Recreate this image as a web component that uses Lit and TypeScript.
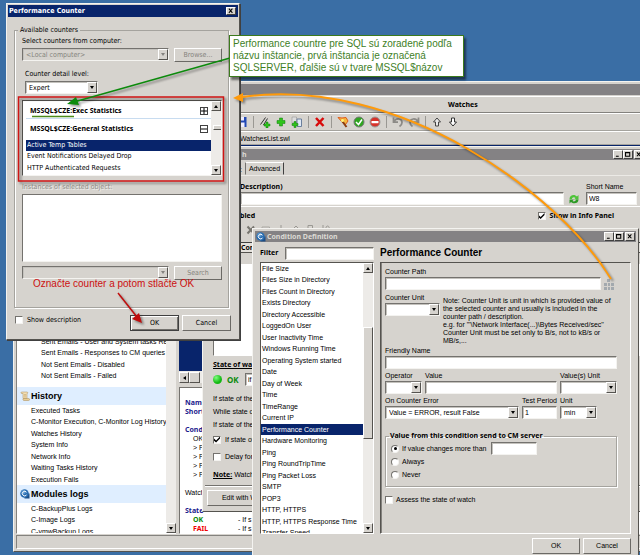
import { LitElement, html, css, svg } from "lit";
import { customElement } from "lit/decorators.js";
import { classMap } from "lit/directives/class-map.js";

const CONDITIONS = [
  "File Size", "Files Size in Directory", "Files Count in Directory", "Exists Directory",
  "Directory Accessible", "LoggedOn User", "User Inactivity Time", "Windows Running Time",
  "Operating System started", "Date", "Day of Week", "Time", "TimeRange", "Current IP",
  "Performance Counter", "Hardware Monitoring", "Ping", "Ping RoundTripTime",
  "Ping Packet Loss", "SMTP", "POP3", "HTTP, HTTPS", "HTTP, HTTPS Response Time", "Transfer Speed",
];
const EMAILS = [
  "Sent Emails - User and System tasks Results", "Sent Emails - Responses to CM queries",
  "Not Sent Emails - Disabled", "Not Sent Emails - Failed",
];
const HISTORY = [
  "Executed Tasks", "C-Monitor Execution, C-Monitor Log History", "Watches History",
  "System Info", "Network Info", "Waiting Tasks History", "Execution Fails",
];
const MODULES = ["C-BackupPlus Logs", "C-Image Logs", "C-vmwBackup Logs"];
const COUNTERS = ["Active Temp Tables", "Event Notifications Delayed Drop", "HTTP Authenticated Requests"];

const logo = html`<svg class="logo" viewBox="0 0 20 20" aria-hidden="true">
  <rect x="9" y="9" width="10" height="10" fill="#1d4e86" />
  <circle cx="9" cy="9" r="8.5" fill="#2a6db0" />
  <circle cx="7" cy="6" r="4.5" fill="#6fa8dc" opacity=".7" />
  <path d="M13 6.5a4.6 4.6 0 1 0 0 5.4" fill="none" stroke="#fff" stroke-width="2" />
</svg>`;

const scroll = html`<svg class="logo" viewBox="0 0 20 20" aria-hidden="true">
  <path d="M4 2h10c2 0 2 3 0 3v10H6V5H4c-3 0-3-3 0-3z" fill="#f3dfb4" stroke="#a88a55" />
  <path d="M7 15h10c3 0 3 4 0 4H8c-2 0-3-2-1-4z" fill="#e9cd94" stroke="#a88a55" />
  <path d="M8 7h4M8 9.500h4M8 12h4" stroke="#b89a66" />
</svg>`;

const arrow = (dir: string) => html`<span class="btn-arrow"><i class=${dir}></i></span>`;

const bar = (thumb: string) => html`<span class="scrollbar" aria-hidden="true">
  ${arrow("up")}<span class="track"><span class="thumb ${thumb}"></span></span>${arrow("down")}</span>`;

const combo = (id: string, value: string, size: string, disabled = false) => html`<span class="combo ${size}">
  <select id=${id} ?disabled=${disabled}><option>${value}</option></select>${arrow("down")}</span>`;

const winButtons = html`<span class="wbtns">
  <button aria-label="Minimize"><svg viewBox="0 0 10 10"><path d="M2 7.500h4" /></svg></button>
  <button aria-label="Maximize"><svg viewBox="0 0 10 10"><path d="M1.500 2h6v5.500h-6zM1.500 2.500h6" /></svg></button>
  <button class="close" aria-label="Close"><svg viewBox="0 0 10 10"><path d="M2 2l5 5.500M7 2L2 7.500" /></svg></button>
</span>`;

@customElement("app-root")
export class AppRoot extends LitElement {
  static styles = css`
    :host { display: block; }
    * { box-sizing: border-box; }
    .desktop {
      position: relative; min-height: 100vh; overflow: hidden; background: #3a6ea5;
      font: 7px/10px "Liberation Sans", Arial, sans-serif; color: #000; white-space: nowrap;
    }
    button, input, select { font: inherit; color: inherit; margin: 0; border-radius: 0; min-width: 0; }
    ul { list-style: none; margin: 0; padding: 0; }
    h1, h2, h3, p, fieldset { margin: 0; padding: 0; font-weight: normal; font-size: inherit; min-width: 0; }
    .b, legend.b { font-family: "Noto Sans", "Open Sans", sans-serif; font-weight: bold; }
    .win {
      position: absolute; display: flex; flex-direction: column; background: #d6d3ce; padding: 1px;
      border: 1px solid; border-color: #f4f3f0 #55534f #55534f #f4f3f0;
    }
    .title {
      display: flex; align-items: center; flex: none; height: 11px; background: #848284; color: #dcdad5;
      font-family: "Noto Sans", "Open Sans", sans-serif; font-weight: bold;
    }
    .title h2 { flex: 1; font-weight: bold; }
    .logo { width: 10px; height: 10px; flex: none; }
    .wbtns { display: flex; padding-right: 1px; }
    .wbtns button, .x {
      display: block; width: 10px; height: 9px; padding: 0; background: #d6d3ce; color: #000;
      border: 1px solid; border-color: #fff #404040 #404040 #fff;
    }
    .wbtns .close { margin-left: 1px; }
    .wbtns svg, .x svg { display: block; width: 8px; height: 7px; }
    .wbtns path, .x path { stroke: #000; stroke-width: 1.500; fill: none; }
    .push {
      display: block; text-align: center; padding: 0; background: #d6d3ce; border: 1px solid;
      border-color: #fff #6b6965 #6b6965 #fff; height: 16px;
    }
    .push:disabled { color: #85837d; }
    .field {
      height: 13px; background: #fff; border: 1px solid; border-color: #74726e #f4f3f0 #f4f3f0 #74726e;
      padding: 0 2px; display: block; box-shadow: inset 1px 1px #c4c2bd;
    }
    .combo {
      display: flex; height: 13px; background: #fff; border: 1px solid;
      border-color: #74726e #f4f3f0 #f4f3f0 #74726e; box-shadow: inset 1px 1px #c4c2bd;
    }
    .combo select { flex: 1; appearance: none; border: 0; background: none; padding: 0 0 0 3px; width: 0; }
    .combo select:disabled { color: #85837d; opacity: 1; }
    .btn-arrow {
      flex: none; width: 10px; height: 11px; display: grid; place-items: center; background: #d6d3ce;
      border: 1px solid; border-color: #fff #55534f #55534f #fff;
    }
    .btn-arrow i { border: 2px solid transparent; width: 0; height: 0; }
    .btn-arrow .down { border-top: 3px solid #000; border-bottom: 0; }
    .btn-arrow .up { border-bottom: 3px solid #000; border-top: 0; }
    .btn-arrow .left { border-right: 3px solid #000; border-left: 0; }
    .check, .radio {
      appearance: none; width: 8px; height: 8px; background: #fff; flex: none; display: grid; place-items: center;
      border: 1px solid; border-color: #74726e #f4f3f0 #f4f3f0 #74726e;
    }
    .check:checked::before {
      content: ""; width: 6px; height: 6px; background: #000;
      clip-path: polygon(0 35%, 35% 65%, 100% 0, 100% 35%, 35% 100%, 0 70%);
    }
    .radio { border-radius: 50%; }
    .radio:checked::before { content: ""; width: 3px; height: 3px; border-radius: 50%; background: #000; }
    .opt { display: flex; align-items: center; gap: 3px; }
    .scrollbar { display: flex; flex-direction: column; width: 10px; background: #edebe8; flex: none; }
    .scrollbar .btn-arrow { height: 10px; }
    .track { flex: 1; display: flex; flex-direction: column; }
    .thumb { background: #d6d3ce; border: 1px solid; border-color: #fff #55534f #55534f #fff; }
    .thumb.list { margin-top: 54px; height: 112px; }
    .thumb.short { margin-top: 14px; height: 5px; }
    .thumb.none { display: none; }
    .rows { display: grid; grid-auto-rows: 11px 12px; line-height: 12px; }
    .sel { background: #08246b; color: #fff; }

    /* main window */
    .main { left: 13px; top: 81px; right: -4px; bottom: 3px; padding: 2px; }
    .head {
      height: 17px; margin-top: 1px; border: 1px solid; border-color: #fff transparent #84827e;
      padding-left: 431px; line-height: 15px; flex: none;
    }
    .tools {
      flex: none; height: 18px; display: flex; align-items: center; gap: 4px; padding-left: 220px;
      border-top: 1px solid #fff; border-bottom: 1px solid #a5a39e;
    }
    .tools svg { width: 12px; height: 12px; flex: none; }
    .tools .sep { width: 1px; height: 12px; background: #9a9893; margin: 0 1px; }
    .tools .tall { height: 17px; }
    .path { flex: none; height: 14px; padding-left: 224px; line-height: 14px; border-top: 1px solid #fff; border-bottom: 1px solid #a5a39e; }
    .body { flex: 1; min-height: 0; display: flex; gap: 3px; }
    .side { width: 160px; display: flex; border-left: 1px solid #84827e; border-bottom: 1px solid #fff; }
    .nav { flex: 1; min-width: 0; overflow: hidden; background: #fff; display: flex; flex-direction: column; justify-content: flex-end; }
    .nav > * { flex: none; }
    .nav .rows { padding-left: 14px; }
    .nav .emails { padding: 0 0 5px 24px; }
    .nav .last { margin-bottom: -4px; }
    .nav h3 {
      display: flex; align-items: center; gap: 1px; height: 18px; padding-left: 3px; background: #dfeeff;
      font: bold 9px/18px "Liberation Sans", Arial, sans-serif;
    }
    .mdi { flex: 1; min-width: 0; display: flex; flex-direction: column; }
    .navy { flex: 1; background: #08246b; }
    .hbar { display: flex; height: 12px; padding-top: 1px; background: #edebe8; }
    .hthumb { width: 11px; background: #d6d3ce; border: 1px solid; border-color: #fff #55534f #55534f #fff; }
    .info {
      height: 147px; margin-top: 4px; border: 1px solid; border-color: #74726e #fff #fff #74726e; background: #fff;
      padding: 10px 0 0 5px; line-height: 9px;
    }
    .info p { height: 9px; }
    .info .in { padding-left: 8px; display: flex; }
    .info .tag { width: 45px; }
    .blue { color: #1a1a8c; }
    .green { color: #0a8a0a; }
    .red { color: #f00000; }
    .status { height: 14px; flex: none; margin-top: 1px; border: 1px solid; border-color: #84827e #fff #fff #84827e; }

    /* watch window */
    .watch { left: 202px; top: 146px; right: -4px; height: 366px; padding: 2px; }
    .watch .title { padding: 0 0 0 37px; }
    .watch .wbtns { margin-right: -4px; }
    .tabs { height: 15px; flex: none; display: flex; align-items: end; padding-left: 35px; gap: 3px; }
    .tabs button {
      background: none; padding: 0 3px; height: 13px; border: 1px solid; border-color: #fff #404040 transparent #74726e; line-height: 11px;
    }
    .wtop { padding: 6px 0 0 35px; border-top: 1px solid #eceae6; }
    .wrow { display: flex; align-items: end; gap: 4px; }
    .grow { flex: 1; min-width: 0; }
    .wrow .field { width: 100%; }
    .short { width: 51px; margin: 0 4px 0 2px; }
    .refresh { width: 12px; height: 12px; flex: none; }
    .enabled { display: flex; justify-content: space-between; padding: 4px 27px 1px 35px; margin: 1px 0 0 -35px; border-top: 1px solid #fff; }
    .enabled .opt { gap: 4px; }
    .wicons { display: flex; gap: 5px; height: 19px; align-items: start; padding: 3px 0 0 6px; }
    .wicons svg { width: 10px; height: 10px; }
    .wlist { margin: 1px 0 0 8px; height: 114px; flex: none; background: #fff; border: 1px solid; border-color: #404040 #fff #fff #74726e; }
    .wlist .col { padding-left: 27px; height: 10px; background: #e4e1dc; border-bottom: 1px solid #55534f; }
    .wlist .grp { height: 11px; background: #d6d3ce; }
    .wstate { padding: 4px 0 0 8px; flex: 1; }
    .wstate h3 { text-decoration: underline; font-weight: bold; }
    .okrow { display: flex; align-items: center; gap: 5px; height: 19px; margin-bottom: 3px; }
    .dot { width: 9px; height: 9px; border-radius: 50%; background: radial-gradient(circle at 35% 30%, #7dff7d, #13b813 60%); }
    .okrow .b { width: 13px; font-size: 8px; }
    .okrow .field { width: 80px; }
    .wstate p { line-height: 13px; }
    .wstate .opt { height: 17px; gap: 4px; }
    .wstate .note { line-height: 20px; }
    .wfoot { border-top: 1px solid #74726e; box-shadow: inset 0 1px #fff; padding: 4px 2px 3px; }
    .wfoot .push { width: 80px; }

    /* condition window */
    .cond { left: 252px; top: 228px; right: 1px; bottom: -6px; padding: 2px; }
    .cond .title { padding-left: 1px; gap: 1px; }
    .cbody { flex: 1; display: grid; grid-template-columns: 114px 1fr; gap: 0 6px; padding: 5px 5px 0; grid-template-rows: 12px 1fr auto; }
    .filter { display: flex; align-items: center; gap: 7px; }
    .filter .field { flex: 1; }
    .cbody h1 { font: bold 10px/12px "Liberation Sans", Arial, sans-serif; }
    .clist { display: flex; margin-top: 3px; height: 272px; background: #fff; border: 1px solid; border-color: #55534f #fff #fff #55534f; overflow: hidden; }
    .clist .rows { flex: 1; }
    .clist li { padding-left: 1px; overflow: hidden; }
    .form {
      margin-top: 3px; padding: 4px 13px 0 4px; border: 1px solid; border-color: #55534f #fff #fff #55534f;
      box-shadow: inset 1px 0 #84827e; height: 272px;
    }
    .form label { display: block; }
    .form .field { width: 100%; }
    .line { display: flex; gap: 3px; align-items: end; }
    .line.top { align-items: start; }
    .line .grow, .line .col { min-width: 0; }
    .pick { width: 12px; height: 12px; flex: none; padding: 0; border: 0; background: none; }
    .pick svg { display: block; width: 10px; height: 11px; }
    .unit { width: 55px; }
    .oper { width: 37px; }
    .valunit { width: 57px; }
    .per { width: 35px; }
    .umin { width: 37px; }
    .tail { width: 57px; }
    .mt { margin-top: 3px; }
    .mt2 { margin-top: 2px; }
    .cnote { line-height: 8px; padding-top: 4px; margin-bottom: 1px; }
    .pathrow { padding-right: 1px; }
    .send { border: 1px solid #a5a39e; box-shadow: 1px 1px #fff, inset 1px 1px #fff; margin-top: 12px; padding: 1px 0 4px 5px; height: 56px; }
    .send legend { padding: 0 1px; margin-left: -2px; }
    .send .opt { height: 13px; }
    .send .field { width: 46px; margin-left: 2px; }
    .form .assess { display: flex; margin-top: 8px; }
    .cfoot { grid-column: 1 / -1; display: flex; justify-content: end; gap: 3px; padding: 4px 0 4px; }
    .cfoot .push { width: 48px; }

    /* counter dialog */
    .dlg {
      left: 6px; top: 3px; width: 234px; padding: 1px; border-width: 1px;
      font-family: "DejaVu Sans Condensed", "DejaVu Sans", sans-serif; box-shadow: 1px 1px #404040;
    }
    .dlg .title { background: #08246b; color: #fff; height: 12px; padding: 0 2px 0 1px; font-family: "DejaVu Sans Condensed", "DejaVu Sans", sans-serif; }
    .dlg .x { width: 10px; height: 8px; }
    .dlg .box { margin: 8px 9px 0 6px; border: 1px solid #a5a39e; box-shadow: 1px 1px #fff, inset 1px 0 #fff; padding: 1px 6px 27px 7px; }
    .dlg legend { padding: 0 2px; margin-left: -4px; }
    .box label { display: block; margin-bottom: 2px; }
    .drow { display: flex; gap: 5px; align-items: start; }
    .drow .combo { width: 147px; }
    .drow .push { width: 48px; height: 14px; line-height: 12px; }
    .mute { color: #8f8d87; text-shadow: 1px 1px #f0efec; }
    .combo:has(select:disabled) { background: #d6d3ce; }
    .combo:has(select:disabled) .down { border-top-color: #84827e; }
    .dlg .det { margin: 7px 0 0 3px; }
    .det .combo { width: 73px; }
    .counters {
      margin-top: 6px; height: 76px; display: flex; background: #fff; overflow: hidden;
      border: 1px solid; border-color: #55534f #f4f3f0 #f4f3f0 #55534f;
    }
    .counters .grow { padding-left: 3px; }
    .counters h3 { display: flex; justify-content: space-between; align-items: center; padding: 2px 3px 0 4px; height: 18px; border-bottom: 1px solid #c8dcf0; font-weight: bold; }
    .counters h3.open { border: 0; height: 21px; padding: 0 3px 1px 4px; }
    .box i.pm { width: 8px; height: 8px; border: 1px solid #404040; display: grid; place-items: center; }
    .pm svg { width: 6px; height: 6px; display: block; }
    .counters li { padding-left: 1px; line-height: 11px; }
    .inst { height: 68px; background: #fff; border: 1px solid; border-color: #74726e #f4f3f0 #f4f3f0 #74726e; margin-bottom: 4px; }
    .dlg .ilabel { margin-top: 6px; margin-bottom: 2px; }
    .dfoot { display: flex; justify-content: space-between; padding: 7px 7px 7px 7px; }
    .dfoot .opt { height: 10px; gap: 4px; }
    .btns { display: flex; gap: 3px; }
    .btns .push { width: 49px; }
    .dlg .main-btn { border-color: #404040; box-shadow: inset 1px 1px #fff, inset -1px -1px #74726e; }

    /* annotations */
    .marks { position: absolute; left: 0; top: 0; width: 640px; height: 555px; pointer-events: none; }
    .sh { filter: drop-shadow(2px 2px 1px rgba(0, 0, 0, .4)); }
    .tip {
      position: absolute; left: 229px; top: 35px; width: 235px; padding: 2px 0 2px 3px; border: 1px solid #3c7a1c;
      background: #fff; color: #41801f; font-size: 10px; line-height: 12px; box-shadow: 2px 3px 2px rgba(0, 0, 0, .5);
    }
    .hint { position: absolute; left: 33px; top: 278px; color: #cc1010; font-size: 10px; line-height: 12px; }
  `;

  private items(list: string[], selected = "") {
    return list.map((t) => html`<li class=${classMap({ sel: t === selected })}>${t}</li>`);
  }

  private toolbar() {
    const icon = (body: unknown) => html`<svg viewBox="0 0 24 24" aria-hidden="true">${body}</svg>`;
    const sep = html`<span class="sep"></span>`;
    const plus = svg`<path d="M9 4h6v5h5v6h-5v5H9v-5H4V9h5z" fill="#2fc41a" stroke="#0e7a0e" />`;
    return html`<div class="tools">
      ${icon(svg`<path d="M1 2h20v20H1z" fill="#2148b4" /><path d="M6 2h10v7H6zM5 13h12v9H5z" fill="#eef" />`)}
      ${sep}
      ${icon(svg`<path d="M3 17L13 3M9 18L17 5" stroke="#333" stroke-width="2" /><path d="M14 12h4v4h4v4h-4v4h-4v-4h-4v-4h4z" fill="#2fc41a" stroke="#0e7a0e" />`)}
      ${icon(plus)}
      ${icon(svg`<path d="M2 2h9v12H2z" fill="#ddd" stroke="#888" /><path d="M12 6h9v15h-9z" fill="#dfe8f5" stroke="#6b7f9c" stroke-width="2" /><path d="M6 11h4v4h4v4h-4v4H6v-4H2v-4h4z" fill="#2fc41a" stroke="#0e7a0e" />`)}
      ${sep}
      ${icon(svg`<path d="M4 4l15 16M19 4L4 20" stroke="#d80b0b" stroke-width="5" />`)}
      ${sep}
      ${icon(svg`<path d="M2 3l8 1 8-1 4 7-5 7-5-3z" fill="#f6b73c" stroke="#e05a1a" stroke-width="2" /><path d="M11 11l8 11" stroke="#8a3d12" stroke-width="4" /><circle cx="11" cy="9" r="3" fill="#fff27a" />`)}
      ${icon(svg`<circle cx="12" cy="12" r="10" fill="#2fa51f" stroke="#777" stroke-width="2" /><path d="M6 12l5 5 7-10" fill="none" stroke="#fff" stroke-width="3" />`)}
      ${icon(svg`<circle cx="12" cy="12" r="10" fill="#d6332b" stroke="#999" stroke-width="2" /><path d="M5 10h14v4.500H5z" fill="#fff" />`)}
      ${sep}
      ${icon(svg`<path d="M3 3v9h9M4 11C8 4 20 4 20 13c0 4-2 6-5 8" fill="none" stroke="#8c8a86" stroke-width="3.500" />`)}
      ${icon(svg`<path d="M21 3v9h-9M20 11C16 4 4 4 4 13c0 4 2 6 5 8" fill="none" stroke="#8c8a86" stroke-width="3.500" />`)}
      ${sep}
      ${icon(svg`<path d="M12 4l7 8h-4v8H9v-8H5z" fill="#e8e8e8" stroke="#444" stroke-width="2" />`)}
      ${icon(svg`<path d="M12 20l7-8h-4V4H9v8H5z" fill="#fff" stroke="#333" stroke-width="2" />`)}
    </div>`;
  }

  private mainWindow() {
    return html`<section class="win main">
      <div class="title"></div>
      <h2 class="head b">Watches</h2>
      ${this.toolbar()}
      <div class="path">WatchesList.swl</div>
      <div class="body">
        <div class="side">
          <nav class="nav">
            <ul class="rows emails">${this.items(EMAILS)}</ul>
            <h3>${scroll}History</h3>
            <ul class="rows">${this.items(HISTORY)}</ul>
            <h3>${logo}Modules logs</h3>
            <ul class="rows last">${this.items(MODULES)}</ul>
          </nav>
          ${bar("none")}
        </div>
        <div class="mdi">
          <div class="navy"></div>
          <div class="hbar">${arrow("left")}<span class="hthumb"></span></div>
          <div class="info">
            <p class="b blue">Name</p><p class="b blue">Short</p><p></p>
            <p class="b blue">Cond</p><p class="in">OK</p>
            <p class="in">&gt; P</p><p class="in">&gt; P</p><p class="in">&gt; P</p><p class="in">&gt; P</p>
            <p></p><p>Watch</p><p></p>
            <p class="b blue">State</p>
            <p class="in"><span class="tag b green">OK</span>- If s</p>
            <p class="in"><span class="tag b red">FAIL</span>- If s</p>
          </div>
        </div>
      </div>
      <div class="status"></div>
    </section>`;
  }

  private watchWindow() {
    return html`<section class="win watch">
      <div class="title"><h2>h</h2>${winButtons}</div>
      <div class="tabs"><span>:</span><button>Advanced</button></div>
      <div class="wtop">
        <div class="wrow">
          <div class="grow"><label class="b" for="desc">Description)</label><input class="field" id="desc" /></div>
          <svg class="refresh" viewBox="0 0 24 24" aria-hidden="true">
            <path d="M3 12C3 4 13 1 18 7l3-3v9h-9l3-3c-3-3-7-1-7 2z" fill="#4fc43a" />
            <path d="M21 13c0 8-10 10-15 5l-3 3v-8h9l-3 3c3 2 7 0 7-3z" fill="#2b9a24" />
          </svg>
          <div class="short"><label for="sname">Short Name</label><input class="field" id="sname" value="W8" /></div>
        </div>
        <div class="enabled b"><span>bled</span>
          <label class="opt"><input class="check" type="checkbox" checked />Show in Info Panel</label></div>
        <div class="wicons">
          <svg viewBox="0 0 20 20"><path d="M3 3l13 14M16 3L3 17" stroke="#77756f" stroke-width="4" /></svg>
          <svg viewBox="0 0 20 20"><path d="M2 4h15v12H2zM6 8h8" stroke="#aaa8a3" stroke-width="2" fill="none" /></svg>
          <svg viewBox="0 0 20 20"><path d="M10 0v18" stroke="#9a9893" stroke-width="2" /></svg>
          <svg viewBox="0 0 20 20"><path d="M4 8l6-6 6 6" stroke="#9a9893" stroke-width="2" fill="none" /></svg>
          <svg viewBox="0 0 20 20"><path d="M4 1h9v6H4z" stroke="#9a9893" stroke-width="2" fill="none" /></svg>
          <svg viewBox="0 0 20 20"><path d="M4 0v18M10 6c0-6 8-5 6 2" stroke="#9a9893" stroke-width="2" fill="none" /></svg>
        </div>
      </div>
      <div class="wlist"><div class="col b">Con</div><div class="grp"></div></div>
      <div class="wstate">
        <h3 class="b">State of wa</h3>
        <div class="okrow"><span class="dot"></span><span class="b green">OK</span>
          <input class="field" value="if" aria-label="OK state" /></div>
        <p>If state of the</p><p>While state o</p><p>If state of the</p>
        <label class="opt"><input class="check" type="checkbox" checked />If state of</label>
        <label class="opt"><input class="check" type="checkbox" />Delay for</label>
        <p class="note"><u class="b">Note:</u> Watch</p>
      </div>
      <div class="wfoot"><button class="push">Edit with Wizard</button></div>
    </section>`;
  }

  private conditionWindow() {
    return html`<section class="win cond">
      <div class="title">${logo}<h2>Condition Definition</h2>${winButtons}</div>
      <div class="cbody">
        <div class="filter"><label class="b" for="filter">Filter</label><input class="field" id="filter" /></div>
        <h1>Performance Counter</h1>
        <div class="clist"><ul class="rows">${this.items(CONDITIONS, "Performance Counter")}</ul>${bar("list")}</div>
        <form class="form">
          <label for="cpath">Counter Path</label>
          <div class="line pathrow"><input class="field grow" id="cpath" />
            <button class="pick" type="button" aria-label="Browse counters"><svg viewBox="0 0 10 11">
              <path d="M3 0h3v3H3zM0 4h3v3H0zM4 4h2v3H4zM7 4h3v3H7zM0 8h3v3H0zM4 8h2v3H4zM7 8h3v3H7z" fill="#a3a9ae" /></svg></button></div>
          <div class="line top mt">
            <div class="unit"><label for="cunit">Counter Unit</label>${combo("cunit", "", "")}</div>
            <p class="cnote">Note: Counter Unit is unit in which is provided value of<br />the selected counter and usually is included in the<br />counter path / description.<br />e.g. for "'\\Network Interface(...)\\Bytes Received/sec''<br />Counter Unit must be set only to B/s, not to kB/s or<br />MB/s,...</p>
          </div>
          <label for="fname">Friendly Name</label><input class="field" id="fname" />
          <div class="line mt2">
            <div class="oper"><label for="oper">Operator</label>${combo("oper", "", "")}</div>
            <div class="grow"><label for="val">Value</label><input class="field" id="val" /></div>
            <div class="valunit"><label for="vunit">Value(s) Unit</label>${combo("vunit", "", "")}</div>
          </div>
          <div class="line mt2">
            <div class="grow"><label for="onerr">On Counter Error</label>${combo("onerr", "Value = ERROR, result False", "")}</div>
            <div class="per"><label for="period">Test Period</label><input class="field" id="period" value="1" /></div>
            <div class="tail"><label for="tunit">Unit</label>${combo("tunit", "min", "umin")}</div>
          </div>
          <fieldset class="send"><legend class="b">Value from this condition send to CM server</legend>
            <div class="opt"><input class="radio" type="radio" name="send" id="s1" checked /><label for="s1">If value changes more than</label><input class="field" aria-label="Change threshold" /></div>
            <div class="opt"><input class="radio" type="radio" name="send" id="s2" /><label for="s2">Always</label></div>
            <div class="opt"><input class="radio" type="radio" name="send" id="s3" /><label for="s3">Never</label></div>
          </fieldset>
          <label class="opt assess"><input class="check" type="checkbox" />Assess the state of watch</label>
        </form>
        <div class="cfoot"><button class="push">OK</button><button class="push">Cancel</button></div>
      </div>
    </section>`;
  }

  private counterDialog() {
    const pm = (d: string) => html`<i class="pm"><svg viewBox="0 0 6 6"><path d=${d} stroke="#000" /></svg></i>`;
    return html`<section class="win dlg">
      <div class="title"><h2>Performance Counter</h2>
        <button class="x" aria-label="Close"><svg viewBox="0 0 10 10"><path d="M2 1l5 6M7 1L2 7" /></svg></button></div>
      <fieldset class="box"><legend>Available counters</legend>
        <label for="comp">Select counters from computer:</label>
        <div class="drow">${combo("comp", "<Local computer>", "", true)}<button class="push" disabled>Browse...</button></div>
        <div class="det"><label for="level">Counter detail level:</label>${combo("level", "Expert", "")}</div>
        <div class="counters">
          <div class="grow">
            <h3 class="b">MSSQL$CZE:Exec Statistics${pm("M0 3h6M3 0v6")}</h3>
            <h3 class="b open">MSSQL$CZE:General Statistics${pm("M0 3h6")}</h3>
            <ul class="rows">${this.items(COUNTERS, "Active Temp Tables")}</ul>
          </div>
          ${bar("short")}
        </div>
        <p class="mute ilabel">Instances of selected object:</p>
        <div class="inst"></div>
        <div class="drow"><span class="combo"><select disabled aria-label="Search text"><option></option></select>${arrow("down")}</span><button class="push" disabled>Search</button></div>
      </fieldset>
      <div class="dfoot">
        <label class="opt"><input class="check" type="checkbox" />Show description</label>
        <div class="btns"><button class="push main-btn">OK</button><button class="push">Cancel</button></div>
      </div>
    </section>`;
  }

  render() {
    return html`<main class="desktop">
      ${this.mainWindow()} ${this.watchWindow()} ${this.conditionWindow()} ${this.counterDialog()}
      <svg class="marks" viewBox="0 0 640 555" aria-hidden="true">
        <g class="sh">
          <rect x="18.500" y="97" width="205" height="84" fill="none" stroke="#d01414" stroke-width="1.500" />
        </g>
        <path d="M32 116.500h42" stroke="#4a8a1a" stroke-width="1.500" />
        <g class="sh">
          <path d="M230 58L74 102" stroke="#0c8a0c" stroke-width="1.500" />
          <path d="M67 104l9-7 3 8z" fill="#0c8a0c" />
          <path d="M118 293l19 24" stroke="#c00c0c" stroke-width="1.500" />
          <path d="M142 323l-10-4 7-6z" fill="#c00c0c" />
          <path d="M611 279C560 195 400 75 242 97" fill="none" stroke="#ff9a0a" stroke-width="2" />
          <path d="M233 98l10-5v9z" fill="#ff9a0a" />
        </g>
      </svg>
      <p class="tip">Performance countre pre SQL sú zoradené podľa<br />názvu inštancie, prvá inštancia je označená<br />SQLSERVER, ďalšie sú v tvare MSSQL$názov</p>
      <p class="hint">Označte counter a potom stlačte OK</p>
    </main>`;
  }
}
